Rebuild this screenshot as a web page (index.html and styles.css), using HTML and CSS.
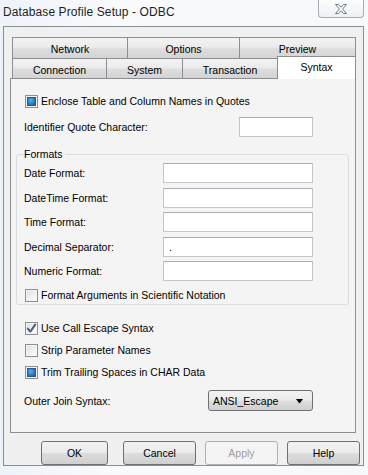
FILE: index.html
```html
<!DOCTYPE html>
<html>
<head>
<meta charset="utf-8">
<link rel="stylesheet" href="styles.css">
</head>
<body>
<div class="window">
  <div class="titlebar">
    <span class="title">Database Profile Setup - ODBC</span>
    <div class="close">
      <svg width="14" height="12" viewBox="0 0 14 12">
        <path d="M1.5 1.5 H4.5 L7 4.2 L9.5 1.5 H12.5 L8.6 6 L12.5 10.5 H9.5 L7 7.8 L4.5 10.5 H1.5 L5.4 6 Z" fill="#fafbfc" stroke="#6d7a8a" stroke-width="1" stroke-linejoin="round"/>
      </svg>
    </div>
  </div>
  <div class="panel">
    <div class="tabs">
      <div class="tabrow">
        <div class="tab w-network">Network</div>
        <div class="tab w-options">Options</div>
        <div class="tab w-preview">Preview</div>
      </div>
      <div class="tabrow row2">
        <div class="tab w-connection">Connection</div>
        <div class="tab w-system">System</div>
        <div class="tab w-transaction">Transaction</div>
        <div class="tab w-syntax selected">Syntax</div>
      </div>
    </div>
    <div class="page">
      <div class="crow r-enclose"><span class="cb filled"><span class="fill"></span></span><span>Enclose Table and Column Names in Quotes</span></div>
      <div class="frow r-ident"><span class="lbl">Identifier Quote Character:</span><span class="textbox short"></span></div>
      <fieldset class="group">
        <legend>Formats</legend>
        <div class="frow"><span class="lbl wide">Date Format:</span><span class="textbox long"></span></div>
        <div class="frow"><span class="lbl wide">DateTime Format:</span><span class="textbox long"></span></div>
        <div class="frow"><span class="lbl wide">Time Format:</span><span class="textbox long"></span></div>
        <div class="frow"><span class="lbl wide">Decimal Separator:</span><span class="textbox long">.</span></div>
        <div class="frow"><span class="lbl wide">Numeric Format:</span><span class="textbox long"></span></div>
        <div class="crow r-sci"><span class="cb"></span><span>Format Arguments in Scientific Notation</span></div>
      </fieldset>
      <div class="crow r-call"><span class="cb"><svg width="11" height="11" viewBox="0 0 11 11"><path d="M1.8 5.6 L4.3 8.6 L9.2 1.6" fill="none" stroke="#4a5c8c" stroke-width="2" stroke-linecap="round" stroke-linejoin="round"/></svg></span><span>Use Call Escape Syntax</span></div>
      <div class="crow r-next"><span class="cb"></span><span>Strip Parameter Names</span></div>
      <div class="crow r-next"><span class="cb filled"><span class="fill"></span></span><span>Trim Trailing Spaces in CHAR Data</span></div>
      <div class="frow r-join"><span class="lbl join">Outer Join Syntax:</span><span class="combo"><span>ANSI_Escape</span><svg width="8" height="5" viewBox="0 0 8 5"><path d="M0 0 H7 L3.5 4.5 Z" fill="#000"/></svg></span></div>
    </div>
    <div class="buttons">
      <span class="btn ok">OK</span>
      <span class="btn">Cancel</span>
      <span class="btn disabled">Apply</span>
      <span class="btn">Help</span>
    </div>
  </div>
</div>
</body>
</html>
```
FILE: styles.css
```css
* { box-sizing: border-box; }
body { margin: 0; }
.window {
  width: 368px; height: 475px; overflow: hidden;
  background: linear-gradient(90deg, #eef3f9 0%, #f8fafc 30%, #f6f8fb 100%);
  font-family: "Liberation Sans", Arial, sans-serif;
  font-size: 10.5px; color: #000;
}
.titlebar { height: 26px; display: flex; justify-content: space-between; align-items: flex-start; padding-left: 3px; }
.title { font-size: 12px; line-height: 16px; margin-top: 4px; color: #1e1e1e; letter-spacing: 0.1px; }
.close {
  width: 46px; height: 19px; margin-top: -1px; margin-right: 4px;
  border: 1px solid #a3acb8; border-top: none; border-radius: 0 0 4px 4px;
  background: linear-gradient(#fdfdfe, #edf1f6);
  display: flex; align-items: center; justify-content: center; padding-top: 1px;
}
.panel {
  margin: 0 4px 0 3px; height: 440px;
  border: 1px solid #8a8f96; background: #f0f0f0;
  padding-top: 10px;
}
.tabs { margin-left: 8px; width: 344px; }
.tabrow { display: flex; align-items: flex-end; }
.tab {
  height: 22px; border: 1px solid #8c8e94; margin-left: -1px;
  background: linear-gradient(#f3f3f3 0%, #ebebeb 45%, #dddddd 55%, #d4d4d4 100%);
  display: flex; align-items: center; justify-content: center; padding-top: 1px;
}
.tab:first-child { margin-left: 0; }
.row2 { margin-top: -1px; height: 20px; }
.row2 .tab { height: 20px; border-bottom: none; padding-top: 2px; }
.row2 .tab.selected {
  height: 23px; margin-top: -2px; margin-bottom: -1px; background: #fff;
  position: relative; z-index: 1; padding-top: 0; padding-bottom: 2px;
}
.w-network { width: 116px; }
.w-options { width: 113px; }
.w-preview { width: 117px; }
.w-connection { width: 95px; }
.w-system { width: 77px; }
.w-transaction { width: 96px; }
.w-syntax { width: 79px; }
.page {
  margin-left: 6px; width: 346px; height: 355px;
  border: 1px solid #8c8e94; background: #f4f4f4;
  padding: 0 4px 0 13px;
}
.crow { display: flex; align-items: center; height: 16px; }
.crow .cb { margin-left: 1px; margin-right: 3px; }
.frow { display: flex; align-items: center; height: 20px; }
.lbl { width: 215px; flex: none; }
.lbl.wide { width: 139px; }
.lbl.join { width: 184px; }
.r-enclose { margin-top: 14px; }
.r-ident { margin-top: 8px; }
.textbox {
  height: 20px; background: #fff;
  border: 1px solid #c3c6cb; border-top-color: #abadb3;
  padding-left: 5px; display: flex; align-items: center;
}
.textbox.short { width: 74px; }
.textbox.long { width: 150px; }
.group {
  margin: 10px 2px 0 -8px; padding: 2px 0 1px 7px;
  border: 1px solid #d8dde2; border-radius: 3px;
  display: flex; flex-direction: column; gap: 4.5px;
}
.group legend { padding: 0 2px 0 0; margin-left: 0; line-height: 14px; }
.group .crow { margin-left: 0; }
.r-sci { margin-top: 1.5px; }
.r-call { margin-top: 15px; }
.r-next { margin-top: 6px; }
.r-join { margin-top: 10px; height: 21px; }
.cb {
  width: 13px; height: 13px; flex: none;
  border: 1px solid #8e8f8f;
  background: linear-gradient(135deg, #dcdcdc, #f6f6f6 70%, #fff);
  box-shadow: inset 0 0 0 1px #f4f4f4;
  display: flex; align-items: center; justify-content: center;
}
.cb.filled { background: #f4f4f4; }
.cb .fill {
  width: 9px; height: 9px;
  background: radial-gradient(circle at 40% 35%, #5faee8 0%, #2f7fc8 55%, #1c5aa3 100%);
  border: 1px solid #24589b;
}
.combo {
  width: 105px; height: 21px; border: 1px solid #707070; border-radius: 3px;
  background: linear-gradient(#f2f2f2 0%, #ebebeb 48%, #dddddd 52%, #cfcfcf 100%);
  display: flex; align-items: center; justify-content: space-between;
  padding: 1px 8px 0 4px;
}
.buttons { display: flex; margin-top: 8px; padding-left: 37px; gap: 9px; }
.btn {
  width: 73px; height: 24px; border: 1px solid #707070; border-radius: 3px;
  background: linear-gradient(#f2f2f2 0%, #ebebeb 48%, #dddddd 52%, #cfcfcf 100%);
  display: flex; align-items: center; justify-content: center;
}
.btn.ok { width: 67px; margin-right: 6px; }
.btn.disabled { color: #a0a0a0; border-color: #adb2b5; background: #f4f4f4; }
```
